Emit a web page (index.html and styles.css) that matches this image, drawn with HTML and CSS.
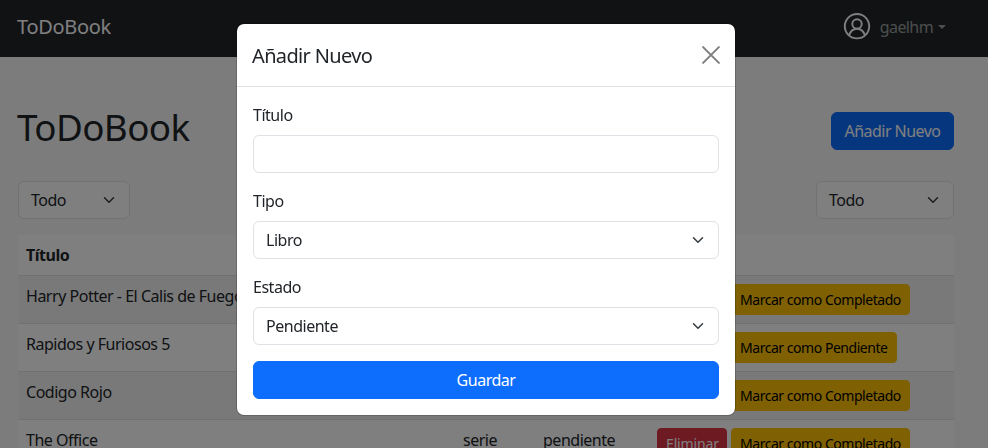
FILE: index.html
```html
<!DOCTYPE html>
<html lang="es">
<head>
<meta charset="utf-8">
<title>ToDoBook</title>
<link rel="stylesheet" href="styles.css">
</head>
<body>
<nav class="navbar">
  <a class="brand">ToDoBook</a>
  <div class="user">
    <svg class="avatar" viewBox="0 0 28 28" fill="none" stroke="#fff" stroke-width="1.9"><circle cx="14" cy="13.200" r="12.200"/><circle cx="14" cy="11" r="4.700"/><path d="M6 22.400c1.500-4.400 4.500-6.700 8-6.700s6.500 2.300 8 6.700"/></svg>
    <span class="username">gaelhm</span><i class="caret"></i>
  </div>
</nav>
<main class="container">
  <header class="heading"><h1>ToDoBook</h1><button class="btn">Añadir Nuevo</button></header>
  <div class="filters">
    <div class="select type-filter"><span>Todo</span><svg class="chevron" viewBox="0 0 16 16"><path d="m2 5 6 6 6-6"/></svg></div>
    <div class="select state-filter"><span>Todo</span><svg class="chevron" viewBox="0 0 16 16"><path d="m2 5 6 6 6-6"/></svg></div>
  </div>
  <table>
    <colgroup><col class="col-title"><col class="col-type"><col class="col-state"><col></colgroup>
    <thead><tr><th>Título</th><th>Tipo</th><th>Estado</th><th></th></tr></thead>
    <tbody>
      <tr><td>Harry Potter - El Calis de Fuego</td><td>libro</td><td>pendiente</td><td><div class="actions"><button class="small danger">Eliminar</button><button class="small warning">Marcar como Completado</button></div></td></tr>
      <tr><td>Rapidos y Furiosos 5</td><td>pelicula</td><td>completado</td><td><div class="actions"><button class="small danger">Eliminar</button><button class="small warning">Marcar como Pendiente</button></div></td></tr>
      <tr><td>Codigo Rojo</td><td>libro</td><td>pendiente</td><td><div class="actions"><button class="small danger">Eliminar</button><button class="small warning">Marcar como Completado</button></div></td></tr>
      <tr><td>The Office</td><td>serie</td><td>pendiente</td><td><div class="actions"><button class="small danger">Eliminar</button><button class="small warning">Marcar como Completado</button></div></td></tr>
    </tbody>
  </table>
</main>
<div class="backdrop">
  <section class="modal">
    <div class="modal-header"><h2>Añadir Nuevo</h2><svg class="close" viewBox="0 0 16 16"><path d="m1 1 14 14M15 1 1 15"/></svg></div>
    <form class="modal-body">
      <label>Título</label><input class="input" type="text">
      <label>Tipo</label><div class="select"><span>Libro</span><svg class="chevron" viewBox="0 0 16 16"><path d="m2 5 6 6 6-6"/></svg></div>
      <label>Estado</label><div class="select"><span>Pendiente</span><svg class="chevron" viewBox="0 0 16 16"><path d="m2 5 6 6 6-6"/></svg></div>
      <button class="btn" type="button">Guardar</button>
    </form>
  </section>
</div>
</body>
</html>
```
FILE: styles.css
```css
* { box-sizing: border-box; }
html, body { height: 100%; overflow: hidden; }
body { margin: 0; background: #f8f9fa; color: #212529; font: 16px/24px "Noto Sans", sans-serif; letter-spacing: -.48px; }
h1, h2 { margin: 0; font-weight: 400; }
button, input { font: inherit; letter-spacing: inherit; }
.navbar { height: 57px; padding: 0 42px 3px 17px; background: #212529; display: flex; align-items: center; justify-content: space-between; }
.brand { color: #fff; font-size: 20px; letter-spacing: -.3px; }
.user { display: flex; align-items: center; color: rgba(255,255,255,.55); }
.username { letter-spacing: -.6px; }
.avatar { width: 28px; height: 28px; margin-right: 9px; }
.caret { margin-left: 5px; border: 4.8px solid transparent; border-top-color: currentColor; border-bottom: 0; }
.container { width: 936px; margin-left: 18px; }
.heading { height: 124px; padding-top: 24px; display: flex; align-items: center; justify-content: space-between; }
h1 { font-size: 36.8px; line-height: 44px; margin: -8px 0 0 -1px; letter-spacing: -.6px; }
.btn { height: 38px; padding: 6px 12px; border: 1px solid #0d6efd; border-radius: 6px; background: #0d6efd; color: #fff; }
.heading .btn { width: 123px; letter-spacing: -.55px; white-space: nowrap; }
.filters { display: flex; justify-content: space-between; }
.select, .input { height: 38px; border: 1px solid #dee2e6; border-radius: 6px; background: #fff; }
.select { padding: 0 12px; display: flex; align-items: center; justify-content: space-between; }
.chevron { width: 16px; height: 12px; fill: none; stroke: #343a40; stroke-width: 2; stroke-linecap: round; stroke-linejoin: round; }
.type-filter { width: 112px; }
.state-filter { width: 138px; }
table { width: 100%; margin-top: 16px; border-collapse: collapse; table-layout: fixed; background: #fff; }
.col-title { width: 437px; }
.col-type { width: 80px; }
.col-state { width: 114px; }
th, td { padding: 8px; text-align: left; vertical-align: top; border-bottom: 1px solid #dee2e6; white-space: nowrap; }
th { height: 40px; line-height: 23px; padding: 9px 8px 7px; }
td { height: 48px; }
tbody tr:nth-child(odd) { background: #f2f2f2; }
.actions { display: flex; gap: 4px; }
.small { height: 31px; padding: 4px 8px; border: 1px solid; border-radius: 4px; font-size: 14px; line-height: 21px; }
.danger { width: 70px; background: #dc3545; border-color: #dc3545; color: #fff; letter-spacing: -.15px; }
.warning { background: #ffc107; border-color: #ffc107; color: #000; letter-spacing: -.46px; }
.backdrop { position: fixed; inset: 0; padding: 23px 0 0 236px; background: rgba(0,0,0,.5); }
.modal { width: 500px; height: 393px; background: #fff; background-clip: padding-box; border: 1px solid rgba(0,0,0,.175); border-radius: 8px; }
.modal-header { height: 63px; padding: 0 15px; border-bottom: 1px solid #dee2e6; display: flex; align-items: center; justify-content: space-between; }
h2 { font-size: 20px; line-height: 30px; letter-spacing: -.65px; padding-top: 1px; }
.close { width: 18px; height: 18px; fill: none; stroke: #7f7f7f; stroke-width: 1.8; stroke-linecap: round; }
.modal-body { padding: 16px 15px 15px 16px; display: flex; flex-direction: column; }
.modal-body label { margin-bottom: 8px; }
.modal-body .input, .modal-body .select { width: 466px; margin-bottom: 16px; }
.modal-body .btn { width: 466px; }
```
